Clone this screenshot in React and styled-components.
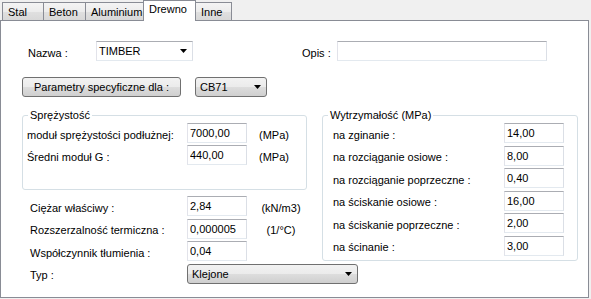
import React from 'react';
import styled, { createGlobalStyle } from 'styled-components';

const GlobalStyle = createGlobalStyle`
  html, body {
    margin: 0;
    padding: 0;
    background: #f0f0f0;
  }
  body {
    font-family: "Liberation Sans", Arial, sans-serif;
    font-size: 11px;
    color: #000;
  }
`;

const buttonFace = 'linear-gradient(#f2f2f2, #ebebeb 50%, #dddddd 51%, #cfcfcf)';

const Window = styled.div`
  width: 591px;
  height: 299px;
  background: #f0f0f0;
`;

const TabStrip = styled.div`
  display: flex;
  align-items: flex-start;
  height: 20px;
  padding-left: 2px;
`;

const Tab = styled.div`
  position: relative;
  z-index: ${p => (p.$active ? 2 : 1)};
  box-sizing: border-box;
  flex: none;
  width: ${p => p.$w}px;
  height: ${p => (p.$active ? 21 : 18)}px;
  margin-top: ${p => (p.$active ? 0 : 2)}px;
  margin-right: -1px;
  padding: ${p => (p.$active ? 2 : 3)}px 0 0 5px;
  border: 1px solid #898c95;
  border-bottom: none;
  background: ${p => (p.$active ? '#fff' : 'linear-gradient(#f4f4f4, #ececec 50%, #e0e0e0 51%, #d8d8d8)')};
  line-height: 13px;
  white-space: nowrap;
`;

const Panel = styled.div`
  box-sizing: border-box;
  width: 589px;
  height: 278px;
  padding: 20px 0 0 21px;
  border: 1px solid #898c95;
  background: #fff;
`;

const TopRow = styled.div`
  display: flex;
  align-items: center;
  height: 20px;
  padding-left: 6px;
`;

const ParamRow = styled.div`
  display: flex;
  align-items: center;
  gap: 14px;
  height: 20px;
  margin-top: 16px;
`;

const Label = styled.span`
  flex: none;
  width: ${p => (p.$w ? `${p.$w}px` : 'auto')};
  margin-left: ${p => p.$ml || 0}px;
  padding-top: 3px;
  white-space: nowrap;
`;

const TextBox = styled.input`
  box-sizing: border-box;
  width: ${p => p.$w || 60}px;
  height: 20px;
  margin: 0;
  padding: 0 2px;
  border: 1px solid;
  border-color: #abadb3 #dbdfe6 #e3e9ef #e2e3ea;
  border-radius: 0;
  background: #fff;
  font: inherit;
  color: #000;
  outline: none;
`;

const Combo = styled.div`
  box-sizing: border-box;
  flex: none;
  display: flex;
  align-items: center;
  justify-content: space-between;
  width: ${p => p.$w}px;
  height: 20px;
  padding: 0 5px 0 ${p => (p.$editable ? 2 : 4)}px;
  border: 1px solid;
  border-color: ${p => (p.$editable ? '#abadb3 #dbdfe6 #e3e9ef #e2e3ea' : '#707070')};
  border-radius: ${p => (p.$editable ? 0 : 3)}px;
  background: ${p => (p.$editable ? '#fff' : buttonFace)};
  white-space: nowrap;
`;

const Arrow = () => (
  <svg width="7" height="4" viewBox="0 0 7 4">
    <path d="M0 0H7L3.5 4Z" fill="#000" />
  </svg>
);

const Button = styled.button`
  box-sizing: border-box;
  flex: none;
  width: 159px;
  height: 20px;
  padding: 0;
  border: 1px solid #707070;
  border-radius: 3px;
  background: ${buttonFace};
  font: inherit;
  color: #000;
`;

const Body = styled.div`
  display: flex;
  align-items: flex-start;
  gap: 15px;
  margin-top: 11px;
`;

const Column = styled.div`
  width: 285px;
  flex: none;
`;

const Group = styled.fieldset`
  box-sizing: border-box;
  width: ${p => p.$w}px;
  height: ${p => p.$h}px;
  min-width: 0;
  margin: 0;
  padding: 0;
  border: 1px solid #d5dfe5;
  border-radius: 3px;
`;

const Caption = styled.legend`
  height: 14px;
  margin-left: 5px;
  padding: 0 2px;
  line-height: 14px;
`;

const Rows = styled.div`
  display: grid;
  grid-template-columns: ${p => p.$cols};
  grid-auto-rows: 20px;
  row-gap: ${p => p.$gap}px;
  align-items: center;
  padding: ${p => p.$top || 0}px 0 0 ${p => p.$left}px;
  margin-top: ${p => p.$mt || 0}px;
`;

const Unit = styled.span`
  padding-top: 3px;
  margin-left: ${p => p.$ml || 0}px;
  text-align: ${p => (p.$center ? 'center' : 'left')};
  white-space: nowrap;
`;

const Wide = styled.div`
  grid-column: 2 / -1;
`;

const tabs = [
  { name: 'Stal', w: 42 },
  { name: 'Beton', w: 43 },
  { name: 'Aluminium', w: 59 },
  { name: 'Drewno', w: 53, active: true },
  { name: 'Inne', w: 37 },
];

const elastic = [
  { label: 'moduł sprężystości podłużnej:', value: '7000,00' },
  { label: 'Średni moduł G :', value: '440,00' },
];

const strength = [
  { label: 'na zginanie :', value: '14,00' },
  { label: 'na rozciąganie osiowe :', value: '8,00' },
  { label: 'na rozciąganie poprzeczne :', value: '0,40' },
  { label: 'na ściskanie osiowe :', value: '16,00' },
  { label: 'na ściskanie poprzeczne :', value: '2,00' },
  { label: 'na ścinanie :', value: '3,00' },
];

const other = [
  { label: 'Ciężar właściwy :', value: '2,84', unit: '(kN/m3)' },
  { label: 'Rozszerzalność termiczna :', value: '0,000005', unit: '(1/°C)' },
  { label: 'Współczynnik tłumienia :', value: '0,04', unit: '' },
];

export default function App() {
  return (
    <Window>
      <GlobalStyle />
      <TabStrip>
        {tabs.map(t => (
          <Tab key={t.name} $w={t.w} $active={t.active}>{t.name}</Tab>
        ))}
      </TabStrip>
      <Panel>
        <TopRow>
          <Label $w={68}>Nazwa :</Label>
          <Combo $w={97} $editable>TIMBER <Arrow /></Combo>
          <Label $w={35} $ml={109}>Opis :</Label>
          <TextBox $w={210} readOnly value="" />
        </TopRow>

        <ParamRow>
          <Button>Parametry specyficzne dla :</Button>
          <Combo $w={72}>CB71 <Arrow /></Combo>
        </ParamRow>

        <Body>
          <Column>
            <Group $w={285} $h={82}>
              <Caption>Sprężystość</Caption>
              <Rows $cols="160px 60px auto" $gap={2} $top={1} $left={4}>
                {elastic.map(r => (
                  <React.Fragment key={r.label}>
                    <Label>{r.label}</Label>
                    <TextBox readOnly value={r.value} />
                    <Unit $ml={12}>(MPa)</Unit>
                  </React.Fragment>
                ))}
              </Rows>
            </Group>

            <Rows $cols="157px 60px 68px" $gap={2.67} $left={8} $mt={6}>
              {other.map(r => (
                <React.Fragment key={r.label}>
                  <Label>{r.label}</Label>
                  <TextBox readOnly value={r.value} />
                  <Unit $center>{r.unit}</Unit>
                </React.Fragment>
              ))}
              <Label>Typ :</Label>
              <Wide>
                <Combo $w={171}>Klejone <Arrow /></Combo>
              </Wide>
            </Rows>
          </Column>

          <Group $w={256} $h={153}>
            <Caption>Wytrzymałość (MPa)</Caption>
            <Rows $cols="171px 60px" $gap={2.6} $top={1} $left={10}>
              {strength.map(r => (
                <React.Fragment key={r.label}>
                  <Label>{r.label}</Label>
                  <TextBox readOnly value={r.value} />
                </React.Fragment>
              ))}
            </Rows>
          </Group>
        </Body>
      </Panel>
    </Window>
  );
}
